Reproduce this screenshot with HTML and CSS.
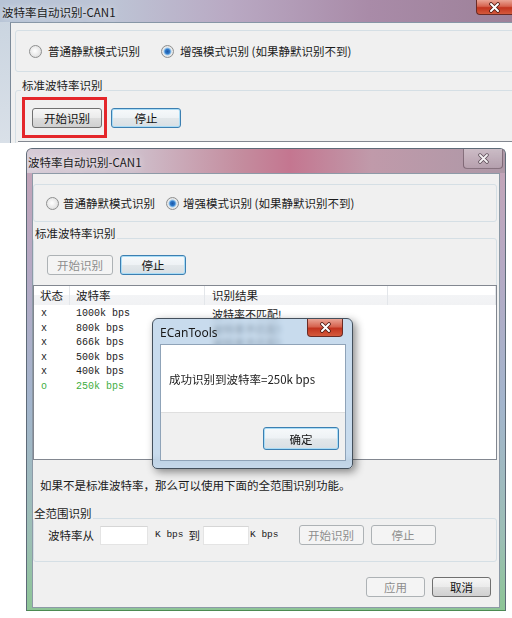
FILE: index.html
```html
<!DOCTYPE html>
<html lang="zh-CN">
<head>
  <meta charset="UTF-8" />
  <meta name="viewport" content="width=device-width, initial-scale=1.0" />
  <title>波特率自动识别-CAN1</title>
  <link rel="stylesheet" href="styles.css">
</head>
<body>
  <!-- 第一步：点开始识别 -->
  <div class="crop">
    <div class="crop-title">
      <span class="title-text">波特率自动识别-CAN1</span>
      <span class="close-red crop-close">
        <svg width="13" height="11" viewBox="0 0 13 11"><path d="M3 2l7 7m0-7l-7 7" stroke="#4b1a14" stroke-width="3.6" stroke-linecap="round"/><path d="M3 2l7 7m0-7l-7 7" stroke="#fff" stroke-width="2" stroke-linecap="round"/></svg>
      </span>
    </div>
    <div class="crop-client">
      <div class="radio-box crop-radios">
        <span class="opt"><span class="radio"></span>普通静默模式识别</span>
        <span class="opt"><span class="radio on"></span>增强模式识别 (如果静默识别不到)</span>
      </div>
      <fieldset class="group crop-group">
        <legend>标准波特率识别</legend>
        <div class="btns">
          <button class="btn">开始识别</button>
          <button class="btn default">停止</button>
        </div>
        <div class="list-edge"></div>
      </fieldset>
    </div>
    <div class="mark"></div>
  </div>

  <!-- 第二步：识别结果 -->
  <div class="win">
    <div class="win-title">
      <span class="title-text">波特率自动识别-CAN1</span>
      <span class="close-glass">
        <svg width="13" height="11" viewBox="0 0 13 11"><path d="M3 2l7 7m0-7l-7 7" stroke="#5a4a55" stroke-width="3.4" stroke-linecap="round"/><path d="M3 2l7 7m0-7l-7 7" stroke="#f4f0f2" stroke-width="1.9" stroke-linecap="round"/></svg>
      </span>
    </div>
    <div class="client">
      <div class="radio-box">
        <span class="opt"><span class="radio"></span>普通静默模式识别</span>
        <span class="opt"><span class="radio on"></span>增强模式识别 (如果静默识别不到)</span>
      </div>

      <fieldset class="group">
        <legend>标准波特率识别</legend>
        <div class="btns">
          <button class="btn" disabled>开始识别</button>
          <button class="btn default">停止</button>
        </div>
        <div class="list">
          <div class="list-head">
            <span>状态</span><span>波特率</span><span>识别结果</span><span></span>
          </div>
          <div class="list-body">
            <div class="list-row"><span>x</span><span>1000k bps</span><span class="res">波特率不匹配!</span></div>
            <div class="list-row"><span>x</span><span>800k bps</span><span class="res">波特率不匹配!</span></div>
            <div class="list-row"><span>x</span><span>666k bps</span><span class="res">波特率不匹配!</span></div>
            <div class="list-row"><span>x</span><span>500k bps</span><span class="res"></span></div>
            <div class="list-row"><span>x</span><span>400k bps</span><span class="res"></span></div>
            <div class="list-row ok"><span>o</span><span>250k bps</span><span class="res"></span></div>
          </div>
        </div>
      </fieldset>

      <p class="hint">如果不是标准波特率，那么可以使用下面的全范围识别功能。</p>

      <fieldset class="group range">
        <legend>全范围识别</legend>
        <div class="range-row">
          <span>波特率从</span>
          <input class="num num1" type="text">
          <span class="mono kbps1">K bps</span><span class="to">到</span>
          <input class="num num2" type="text">
          <span class="mono kbps2">K bps</span>
          <button class="btn range-btn start" disabled>开始识别</button>
          <button class="btn range-btn" disabled>停止</button>
        </div>
      </fieldset>

      <div class="footer-btns">
        <button class="btn small" disabled>应用</button>
        <button class="btn small">取消</button>
      </div>
    </div>
  </div>

  <!-- 弹出的消息框 -->
  <div class="msgbox">
    <div class="msg-title">
      <span>ECanTools</span>
      <span class="close-red msg-close">
        <svg width="13" height="11" viewBox="0 0 13 11"><path d="M3 2l7 7m0-7l-7 7" stroke="#4b1a14" stroke-width="3.6" stroke-linecap="round"/><path d="M3 2l7 7m0-7l-7 7" stroke="#fff" stroke-width="2" stroke-linecap="round"/></svg>
      </span>
    </div>
    <div class="msg-client">
      <div class="msg-body">成功识别到波特率=250k bps</div>
      <div class="msg-foot">
        <button class="btn default ok-btn">确定</button>
      </div>
    </div>
  </div>
</body>
</html>
```

FILE: styles.css
```css
body {
  margin: 0;
  background: #fff;
  font-family: "Noto Sans CJK SC", "Noto Sans", sans-serif;
  font-size: 11.5px;
  line-height: 14px;
  color: #1b1b1b;
}
fieldset {
  margin: 0;
  min-width: 0;
}
.title-text {
  text-shadow: 0 0 6px rgba(255, 255, 255, 0.9);
}

/* 按钮 (win7) */
.btn {
  box-sizing: border-box;
  height: 20px;
  padding: 0;
  font-family: inherit;
  font-size: 11.5px;
  color: #111;
  border: 1px solid #707070;
  border-radius: 3px;
  background: linear-gradient(#f6f6f6, #ebebeb 48%, #dddddd 52%, #d0d0d0);
}
.btn.default {
  border-color: #3c7fb1;
  box-shadow: inset 0 0 0 1px #a9dcf6;
  background: linear-gradient(#f6f9fb, #eef2f5 48%, #e2e7ea 52%, #d8dfe4);
}
.btn:disabled {
  border-color: #adb2b5;
  background: #f4f4f4;
  color: #8d8d8d;
}

/* 单选框 */
.radio-box {
  box-sizing: border-box;
  display: flex;
  align-items: center;
  border: 1px solid #d5dfe5;
  border-radius: 3px;
}
.opt {
  display: flex;
  align-items: center;
}
.radio {
  flex: none;
  box-sizing: border-box;
  width: 13px;
  height: 13px;
  margin-right: 4px;
  border: 1px solid #8e8f8f;
  border-radius: 50%;
  background: radial-gradient(circle at 45% 45%, #ffffff, #e6e6e6 60%, #cfcfcf);
}
.radio.on {
  background: radial-gradient(circle, #1c58a6 0, #2f78c8 2.2px, #8cc0ea 3.4px, #ececec 4.4px, #d4d4d4 100%);
}

/* 分组框 */
.group {
  border: 1px solid #d5dfe5;
  border-radius: 3px;
  padding: 0;
}
.group legend {
  padding: 0 1px 10px;
  line-height: 14px;
}
.btns {
  display: flex;
  gap: 7px;
  padding: 5px 0 0 13px;
}
.btns .btn {
  width: 66px;
}

.close-red {
  box-sizing: border-box;
  display: flex;
  align-items: center;
  justify-content: center;
  border: 1px solid #6a2b25;
  border-top: none;
  background: linear-gradient(#eaa495, #d66450 45%, #c2341f 55%, #d45a3c);
}

/* ---- 截图1 ---- */
.crop {
  position: relative;
  height: 143px;
  overflow: hidden;
  background: linear-gradient(#c8d3df, #d9e0e8);
}
.crop-title {
  display: flex;
  justify-content: space-between;
  height: 22px;
  line-height: 24px;
  padding-left: 2px;
  background: linear-gradient(to right, #b7c4d6 0, #bdc4d5 22%, #b9a9c3 45%, #a98ba8 72%, #9d8199 100%);
}
.crop-close {
  width: 36px;
  height: 15px;
  border-right: none;
  border-radius: 0 0 0 4px;
}
.crop-client {
  box-sizing: border-box;
  height: 121px;
  margin-left: 10px;
  border-left: 1px solid #7c8a99;
  border-top: 1px solid #8796a6;
  background: #f0f0f0;
  overflow: hidden;
}
.crop-radios {
  height: 42px;
  margin: 7px -10px 0 4px;
  padding-left: 13px;
}
.crop-radios .opt + .opt {
  margin-left: 21px;
}
.crop-radios .radio {
  margin-right: 6px;
}
.crop-group {
  margin: 6px -10px 0 4px;
}
.crop-group legend {
  margin-left: 5px;
}
.crop-group .btns {
  gap: 9px;
  padding: 6px 0 0 16px;
}
.crop-group .btn {
  width: 70px;
}
.list-edge {
  height: 10px;
  margin: 13px 0 0 2px;
  border-top: 1px solid #828790;
  background: #fff;
}
.mark {
  position: absolute;
  left: 22px;
  top: 97px;
  box-sizing: border-box;
  width: 85px;
  height: 41px;
  border: 3px solid #e4262a;
}

/* ---- 截图2 ---- */
.win {
  box-sizing: border-box;
  width: 480px;
  margin: 5px 0 0 26px;
  padding: 0 5px 2px;
  border: 1px solid #5e6b78;
  border-bottom-color: #4c8a52;
  border-radius: 6px 6px 0 0;
  background: linear-gradient(#c6a4b6 0, #b6a9c4 25%, #a3b5cd 55%, #9cbfb4 85%, #8dc596 100%);
}
.win-title {
  display: flex;
  justify-content: space-between;
  height: 24px;
  line-height: 27px;
  margin: 0 -5px;
  padding-left: 1px;
  border-radius: 5px 5px 0 0;
  background: linear-gradient(to right, #d6ccd7 0, #cfc0cc 22%, #c48c9e 45%, #c47690 55%, #c09aaa 72%, #ad98a7 100%);
}
.close-glass {
  box-sizing: border-box;
  display: flex;
  align-items: center;
  justify-content: center;
  width: 40px;
  height: 20px;
  margin-right: 2px;
  border: 1px solid rgba(80, 55, 70, 0.55);
  border-top: none;
  border-radius: 0 0 4px 4px;
  background: linear-gradient(rgba(255, 255, 255, 0.35), rgba(255, 255, 255, 0.08));
}
.client {
  box-sizing: border-box;
  height: 435px;
  border: 1px solid #8d9aa7;
  background: #f0f0f0;
}
.client .radio-box {
  height: 38px;
  margin: 10px 2px 0 0;
  padding-left: 12px;
}
.client .radio-box .opt + .opt {
  margin-left: 11px;
}
.client .group {
  margin: 4px 2px 0 0;
}

.list {
  box-sizing: border-box;
  height: 175px;
  margin: 10px -1px -1px;
  border: 1px solid #828790;
  background: #fff;
}
.list-head,
.list-row {
  display: grid;
  grid-template-columns: 36px 135px 183px 1fr;
}
.list-head {
  height: 19px;
  line-height: 19px;
  background: linear-gradient(#ffffff 0, #ffffff 50%, #f3f4f6 50%, #f1f2f4);
}
.list-head span {
  border-right: 1px solid #e3e6ea;
  padding-left: 6px;
}
.list-head span:nth-child(3) {
  padding-left: 7px;
}
.list-body {
  padding-top: 2px;
}
.list-row {
  height: 14.6px;
  line-height: 14.6px;
  font-family: "Liberation Mono", monospace;
  font-size: 10px;
  color: #222;
}
.list-row span:first-child {
  padding-left: 7px;
}
.list-row span:nth-child(2) {
  padding-left: 6px;
}
.list-row .res {
  padding-left: 7px;
  font-family: "Noto Sans CJK SC", sans-serif;
  font-size: 11px;
}
.list-row.ok {
  color: #3fae3f;
}

.hint {
  margin: 18px 0 0;
  padding-left: 7px;
  line-height: 14px;
}
.client .range {
  margin-top: 14px;
  padding-bottom: 15px;
}
.range legend {
  padding-left: 0;
}
.range-row {
  display: flex;
  align-items: center;
  height: 22px;
  margin-top: -6px;
  padding-left: 14px;
}
.num {
  box-sizing: border-box;
  height: 19px;
  padding: 0;
  border: 1px solid #e4e4e4;
  border-top-color: #d6d6d6;
  background: #fff;
}
.num1 {
  width: 48px;
  margin-left: 6px;
}
.num2 {
  width: 46px;
  margin-left: 3px;
}
.mono {
  font-family: "Liberation Mono", monospace;
  font-size: 9.5px;
  color: #222;
}
.kbps1 {
  margin-left: 7px;
}
.to {
  margin-left: 5px;
}
.kbps2 {
  margin-left: 1px;
}
.range-btn {
  width: 65px;
  margin-left: 7px;
}
.range-btn.start {
  margin-left: 20px;
}
.footer-btns {
  display: flex;
  justify-content: flex-end;
  gap: 7px;
  margin-top: 15px;
  padding-right: 8px;
}
.btn.small {
  width: 59px;
}

/* ---- 消息框 ---- */
.msgbox {
  position: absolute;
  left: 152px;
  top: 318px;
  box-sizing: border-box;
  width: 201px;
  height: 151px;
  padding: 0 6px 7px 7px;
  border: 1px solid #44505c;
  border-radius: 6px 6px 5px 5px;
  background: rgba(176, 204, 229, 0.7);
  backdrop-filter: blur(2.5px);
  box-shadow: 3px 3px 9px rgba(0, 0, 0, 0.45);
}
.msg-title {
  display: flex;
  justify-content: space-between;
  height: 25px;
  line-height: 28px;
  font-family: "Noto Sans", sans-serif;
  font-size: 12px;
  color: #1a1a1a;
}
.msg-close {
  width: 36px;
  height: 18px;
  margin-right: 3px;
  border-radius: 0 0 4px 4px;
}
.msg-client {
  box-sizing: border-box;
  height: 117px;
  border: 1px solid #8fa3b8;
  background: #fff;
}
.msg-body {
  display: flex;
  align-items: center;
  height: 67px;
  padding-left: 8px;
  font-size: 11.5px;
  color: #222;
}
.msg-foot {
  box-sizing: border-box;
  display: flex;
  justify-content: flex-end;
  height: 48px;
  padding: 14px 6px 0 0;
  border-top: 1px solid #dfdfdf;
  background: #f0f0f0;
}
.ok-btn {
  width: 76px;
  height: 23px;
}
```
